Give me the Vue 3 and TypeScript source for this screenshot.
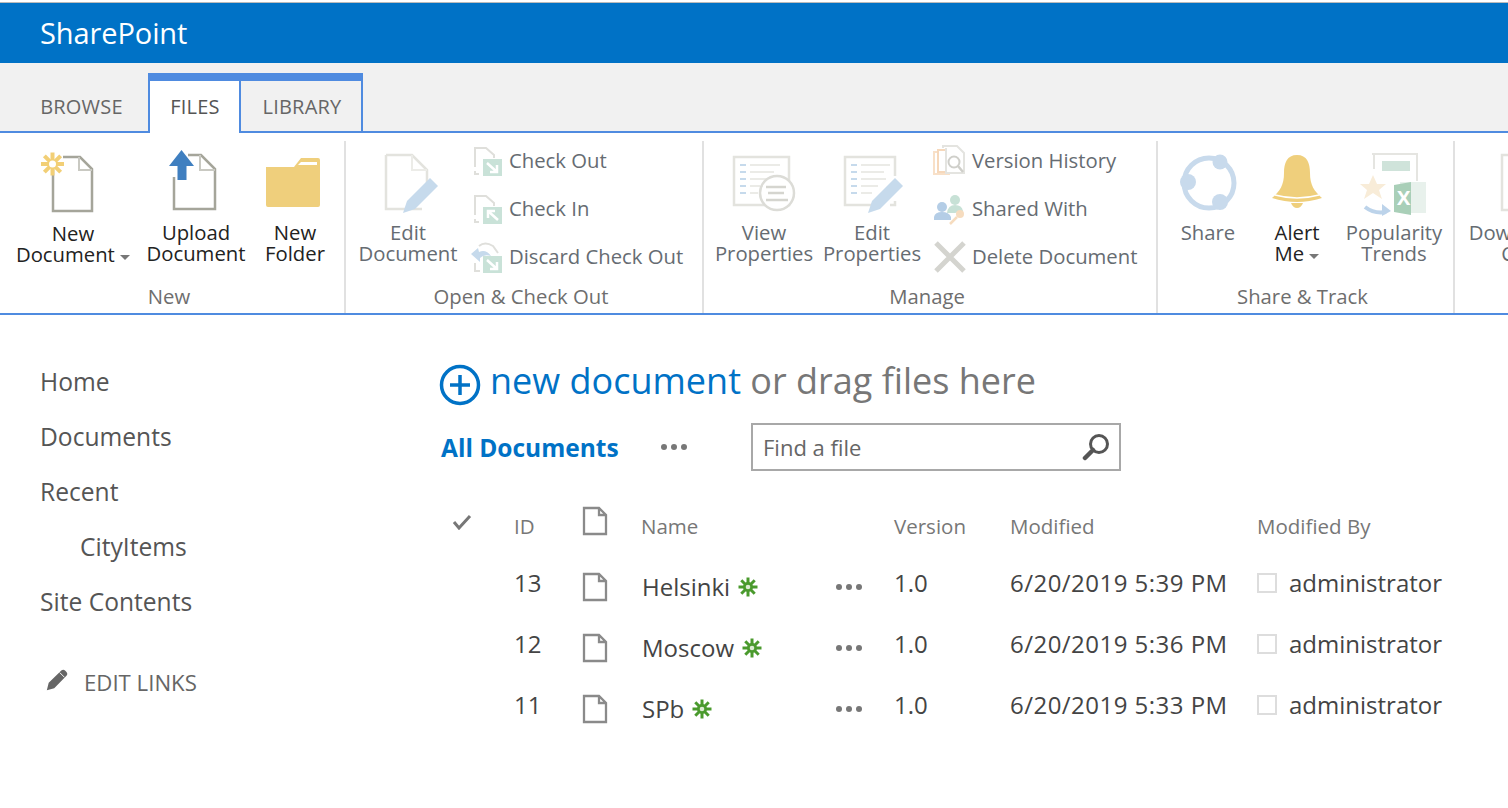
<script setup lang="ts">
const nav: { label: string; sub?: boolean }[] = [
  { label: 'Home' },
  { label: 'Documents' },
  { label: 'Recent' },
  { label: 'CityItems', sub: true },
  { label: 'Site Contents' },
]
const rows = [
  { id: 13, name: 'Helsinki', time: '6/20/2019 5:39 PM' },
  { id: 12, name: 'Moscow', time: '6/20/2019 5:36 PM' },
  { id: 11, name: 'SPb', time: '6/20/2019 5:33 PM' },
]
const rays = [0, 45, 90, 135]
</script>

<template>
  <div class="page">
    <header class="suite">SharePoint</header>

    <nav class="tabs">
      <div class="tab plain">BROWSE</div>
      <div class="tab active">FILES</div>
      <div class="tab ctx">LIBRARY</div>
      <div class="tab-fill"></div>
    </nav>

    <section class="ribbon">
      <div class="group g1">
        <div class="cmds">
          <div class="big w114 low">
            <svg class="ico" viewBox="0 0 80 81">
              <path d="M20 24V70H59V28L47 16H30" fill="none" stroke="#a5a59a" stroke-width="2.5" />
              <path d="M46 16V29H59" fill="none" stroke="#c9c9c2" stroke-width="2" />
              <g stroke="#f2cf76" stroke-width="4">
                <line v-for="r in rays" :key="r" x1="8" y1="23" x2="31" y2="23" :transform="`rotate(${r} 19.5 23)`" />
              </g>
              <circle cx="19.5" cy="23" r="3.500" fill="#fff" />
            </svg>
            <span class="txt on">New<br />Document <i class="caret"></i></span>
          </div>
          <div class="big w132">
            <svg class="ico" viewBox="0 0 80 81">
              <path d="M32 14H45L59 28V68H18V36" fill="none" stroke="#a5a59a" stroke-width="2.5" />
              <path d="M44 14V29H59" fill="none" stroke="#c9c9c2" stroke-width="2" />
              <path d="M25.500 9L38 25H30.500V39H21.500V25H13Z" fill="#3f7fc0" />
            </svg>
            <span class="txt on">Upload<br />Document</span>
          </div>
          <div class="big w66">
            <svg class="ico" viewBox="0 0 80 81">
              <path d="M11 26H39L46 17H63Q65 17 65 19V64Q65 66 63 66H13Q11 66 11 64Z" fill="#efcf7c" />
              <path d="M46 21L43 24H62V21Z" fill="#fff" />
            </svg>
            <span class="txt on">New<br />Folder</span>
          </div>
        </div>
        <div class="glabel">New</div>
      </div>

      <div class="group g2">
        <div class="cmds">
          <div class="big w124">
            <svg class="ico" viewBox="0 0 80 81">
              <path d="M18 14H44L59 29V53M54 68H18V14" fill="none" stroke="#e3e3de" stroke-width="2.500" />
              <path d="M44 14V29H59" fill="none" stroke="#ecece8" stroke-width="2" />
              <path d="M35 72L39 60L62 37L70 45L47 68Z" fill="#c6daec" />
            </svg>
            <span class="txt">Edit<br />Document</span>
          </div>
          <div class="small-list">
            <div class="small">
              <svg class="sico" viewBox="0 0 36 32">
                <path d="M5 22V3H16L24 10V13M5 26V29H9" fill="none" stroke="#dfdfdb" stroke-width="2" />
                <rect x="13" y="14" width="19" height="17" fill="#c9e2d8" />
                <path d="M17 18L27 27M27 20V27H20" fill="none" stroke="#fff" stroke-width="2.500" />
              </svg>
              <span class="txt">Check Out</span>
            </div>
            <div class="small">
              <svg class="sico" viewBox="0 0 36 32">
                <path d="M5 22V3H16L24 10V13M5 26V29H9" fill="none" stroke="#dfdfdb" stroke-width="2" />
                <rect x="13" y="14" width="19" height="17" fill="#c9e2d8" />
                <path d="M28 27L18 18M18 25V18H25" fill="none" stroke="#fff" stroke-width="2.500" />
              </svg>
              <span class="txt">Check In</span>
            </div>
            <div class="small">
              <svg class="sico" viewBox="0 0 36 32">
                <path d="M9 5Q15 0 23 5L28 12M5 22V30H10" fill="none" stroke="#dfdfdb" stroke-width="2" />
                <path d="M1 13L8 7L9 11Q16 8 21 15Q14 13 10 17L10 21Z" fill="#c6daec" />
                <rect x="13" y="15" width="19" height="17" fill="#c9e2d8" />
                <path d="M17 19L27 28M27 21V28H20" fill="none" stroke="#fff" stroke-width="2.500" />
              </svg>
              <span class="txt">Discard Check Out</span>
            </div>
          </div>
        </div>
        <div class="glabel">Open &amp; Check Out</div>
      </div>

      <div class="group g3">
        <div class="cmds">
          <div class="big w120">
            <svg class="ico" viewBox="0 0 80 81">
              <rect x="10" y="16" width="55" height="48" fill="none" stroke="#e3e3de" stroke-width="2.500" />
              <path d="M16 24H22M16 31H22M16 38H22M16 45H22M16 52H22" stroke="#c6daec" stroke-width="2" />
              <path d="M26 24H56M26 31H50M26 38H46M26 45H36M26 52H34" stroke="#ebebe7" stroke-width="2" />
              <circle cx="53" cy="52" r="17" fill="#fff" stroke="#dcdcd7" stroke-width="2.500" />
              <path d="M42 46H62M44 52H60M42 59H64" stroke="#d5d5cf" stroke-width="2.500" />
            </svg>
            <span class="txt">View<br />Properties</span>
          </div>
          <div class="big w96">
            <svg class="ico" viewBox="0 0 80 81">
              <path d="M63 35V16H13V64H41M63 60V64H58" fill="none" stroke="#e3e3de" stroke-width="2.500" />
              <path d="M19 24H25M19 31H25M19 38H25M19 45H25M19 52H25" stroke="#c6daec" stroke-width="2" />
              <path d="M29 24H58M29 31H52M29 38H54M29 45H46M29 52H40" stroke="#ebebe7" stroke-width="2" />
              <path d="M36 72L40 60L63 37L71 45L48 68Z" fill="#c6daec" />
            </svg>
            <span class="txt">Edit<br />Properties</span>
          </div>
          <div class="small-list m13">
            <div class="small">
              <svg class="sico" viewBox="0 0 36 32">
                <rect x="1" y="7" width="15" height="22" fill="none" stroke="#f8e0c8" stroke-width="2" />
                <rect x="5" y="5" width="15" height="22" fill="#fff" stroke="#f6d8bb" stroke-width="2" />
                <path d="M10 3V1H24L31 8V28H13V3" fill="#fff" stroke="#e4e4e0" stroke-width="2" />
                <circle cx="21" cy="17" r="5.500" fill="#fff" stroke="#cfcfca" stroke-width="2" />
                <path d="M25 21L30 27" stroke="#cfcfca" stroke-width="2.500" />
              </svg>
              <span class="txt">Version History</span>
            </div>
            <div class="small">
              <svg class="sico" viewBox="0 0 36 32">
                <circle cx="22" cy="7" r="5" fill="#c7e1d6" />
                <path d="M14 20Q15 12 22 12Q29 12 30 18L22 20Z" fill="#c7e1d6" />
                <circle cx="9" cy="14" r="5" fill="#b4cde6" />
                <path d="M1 27V24Q2 19 9 19Q16 19 18 24V27Z" fill="#b4cde6" />
                <circle cx="27" cy="21" r="4" fill="#f6dcbf" />
                <path d="M24 24L17 31" stroke="#f6dcbf" stroke-width="2.500" />
              </svg>
              <span class="txt">Shared With</span>
            </div>
            <div class="small">
              <svg class="sico" viewBox="0 0 36 32">
                <path d="M3 2L31 30M31 2L3 30" stroke="#d4d4cf" stroke-width="5" />
              </svg>
              <span class="txt">Delete Document</span>
            </div>
          </div>
        </div>
        <div class="glabel">Manage</div>
      </div>

      <div class="group g4">
        <div class="cmds">
          <div class="big w100">
            <svg class="ico" viewBox="0 0 80 81">
              <circle cx="41" cy="42" r="25" fill="none" stroke="#c8daec" stroke-width="5" />
              <circle cx="52" cy="21" r="7.500" fill="#c8daec" />
              <circle cx="20" cy="41" r="8" fill="#c8daec" />
              <circle cx="52" cy="61" r="8" fill="#c8daec" />
            </svg>
            <span class="txt">Share</span>
          </div>
          <div class="big w78">
            <svg class="ico" viewBox="0 0 80 81">
              <path d="M40 14C30 14 27 22 27 32C27 44 23 50 15 57Q40 65 65 57C57 50 53 44 53 32C53 22 50 14 40 14Z" fill="#efcf7c" />
              <path d="M18 54Q40 60 62 54" fill="none" stroke="#fff" stroke-width="1.500" />
              <path d="M34 62H46Q44 67 40 67Q36 67 34 62Z" fill="#efcf7c" />
            </svg>
            <span class="txt on">Alert<br />Me <i class="caret"></i></span>
          </div>
          <div class="big w116">
            <svg class="ico" viewBox="0 0 80 81">
              <path d="M18 13H63V40M20 13V28" fill="none" stroke="#e5e5e1" stroke-width="2" />
              <rect x="28" y="20" width="28" height="10" fill="#cfe3da" />
              <path d="M19 34L23 43H32L25 49L28 58L19 52L10 58L13 49L6 43H15Z" fill="#f8ecd8" />
              <path d="M11 66Q20 73 32 71" fill="none" stroke="#bcd3ea" stroke-width="4" />
              <path d="M28 63L37 70L28 75Z" fill="#bcd3ea" />
              <rect x="46" y="41" width="26" height="31" fill="#e8f1ec" />
              <path d="M40 44L57 41V74L40 71Z" fill="#a9cfb8" />
              <text x="43" y="64" font-size="20" font-weight="700" fill="#fff" font-family="'Open Sans', sans-serif">X</text>
            </svg>
            <span class="txt">Popularity<br />Trends</span>
          </div>
        </div>
        <div class="glabel">Share &amp; Track</div>
      </div>

      <div class="group g5">
        <div class="cmds">
          <div class="big w140">
            <svg class="ico" viewBox="0 0 80 81">
              <path d="M17 14H44L59 29V69H17Z" fill="none" stroke="#e3e3de" stroke-width="2.500" />
            </svg>
            <span class="txt">Download a<br />Copy</span>
          </div>
        </div>
      </div>
    </section>

    <main class="content">
      <aside class="side">
        <a v-for="n in nav" :key="n.label" class="nav-item" :class="{ sub: n.sub }">{{ n.label }}</a>
        <a class="edit-links">
          <svg class="pencil" viewBox="0 0 26 26">
            <path d="M2 24L4 16L18 2.500Q20 1 22 3L23.500 4.500Q25 6.500 23.500 8L10 22Z" fill="#666" />
            <path d="M16 5L21 10" stroke="#fff" stroke-width="1" />
          </svg>
          <span>EDIT LINKS</span>
        </a>
      </aside>

      <div class="main">
        <h1 class="hero">
          <svg class="plus" viewBox="0 0 42 42">
            <circle cx="21" cy="21" r="18.500" fill="none" stroke="#0072c6" stroke-width="3.500" />
            <path d="M21 11V31M11 21H31" stroke="#0072c6" stroke-width="3.500" />
          </svg>
          <span class="hero-text"><span class="link">new document</span> <span class="or">or drag files here</span></span>
        </h1>

        <div class="views">
          <span class="view-name">All Documents</span>
          <svg class="dots view-dots" viewBox="0 0 28 8"><circle v-for="x in [4, 14, 24]" :key="x" :cx="x" cy="4" r="3" fill="#777" /></svg>
          <div class="search">
            <span>Find a file</span>
            <svg class="mag" viewBox="0 0 28 28">
              <circle cx="17" cy="11" r="8.500" fill="none" stroke="#555" stroke-width="3" />
              <path d="M11 17L3 25" stroke="#555" stroke-width="4.500" stroke-linecap="round" />
            </svg>
          </div>
        </div>

        <div class="list">
          <div class="row head">
            <svg class="tick" viewBox="0 0 20 16"><path d="M2 8L7 14L18 2" fill="none" stroke="#777" stroke-width="3" /></svg>
            <span>ID</span>
            <svg class="doc up" viewBox="0 0 26 30">
              <path d="M2 2H17L24 9V28H2Z M17 2V9H24" fill="none" stroke="#8a8a8a" stroke-width="2.300" />
            </svg>
            <span class="hname">Name</span>
            <span></span>
            <span>Version</span>
            <span>Modified</span>
            <span>Modified By</span>
          </div>
          <div v-for="r in rows" :key="r.id" class="row data">
            <span></span>
            <span>{{ r.id }}</span>
            <svg class="doc" viewBox="0 0 26 30">
              <path d="M2 2H17L24 9V28H2Z M17 2V9H24" fill="none" stroke="#8a8a8a" stroke-width="2.300" />
            </svg>
            <span class="name">
              {{ r.name }}
              <svg class="new" viewBox="0 0 20 20">
                <g stroke="#4a9a2d" stroke-width="3">
                  <line v-for="a in rays" :key="a" x1="0.5" y1="10" x2="19.500" y2="10" :transform="`rotate(${a} 10 10)`" />
                </g>
                <circle cx="10" cy="10" r="5" fill="#4a9a2d" />
                <circle cx="10" cy="10" r="2.300" fill="#dcebd2" />
              </svg>
            </span>
            <svg class="dots" viewBox="0 0 28 8"><circle v-for="x in [4, 14, 24]" :key="x" :cx="x" cy="4" r="3" fill="#777" /></svg>
            <span>1.0</span>
            <span class="time">{{ r.time }}</span>
            <span class="by"><i class="box"></i>administrator</span>
          </div>
        </div>
      </div>
    </main>
  </div>
</template>

<style>
html, body { margin: 0; background: #fff; overflow: hidden; }
</style>

<style scoped>
.page {
  width: 1508px;
  height: 808px;
  overflow: hidden;
  font-family: "Open Sans", "Noto Sans", sans-serif;
  padding-top: 2px;
  box-sizing: border-box;
}
.suite {
  height: 61px;
  box-sizing: border-box;
  border-top: 1px solid #bbb;
  background: #0072c6;
  color: #fff;
  font-size: 29px;
  line-height: 60px;
  padding-left: 40px;
  letter-spacing: -0.1px;
}
.tabs {
  display: flex;
  height: 70px;
  background: #f1f1f1;
  align-items: flex-end;
}
.tab {
  height: 60px;
  box-sizing: border-box;
  font-size: 20px;
  color: #666;
  line-height: 52px;
  text-align: center;
  letter-spacing: 0.2px;
}
.plain {
  width: 148px;
  padding: 8px 0 0 15px;
  border-bottom: 2px solid #4f8be0;
}
.active, .ctx {
  border-top: 8px solid #4f8be0;
  flex: none;
}
.active {
  width: 93px;
  background: #fff;
  border-left: 2px solid #4f8be0;
  border-right: 2px solid #4f8be0;
  color: #555;
  padding-left: 1px;
}
.ctx {
  width: 122px;
  border-right: 2px solid #4f8be0;
  border-bottom: 2px solid #4f8be0;
  padding-left: 2px;
}
.tab-fill {
  flex: 1;
  height: 2px;
  background: #4f8be0;
}
.ribbon {
  display: flex;
  height: 182px;
  box-sizing: border-box;
  padding-top: 8px;
  border-bottom: 2px solid #4f8be0;
}
.group {
  display: flex;
  flex-direction: column;
  flex: none;
  box-sizing: border-box;
  border-right: 2px solid #e1e1e1;
}
.g1 { width: 346px; padding-left: 16px; }
.g2 { width: 358px; }
.g3 { width: 454px; }
.g4 { width: 297px; }
.g5 { width: 140px; border-right: 0; }
.cmds { display: flex; height: 142px; }
.glabel {
  height: 30px;
  font-size: 20.300px;
  line-height: 27px;
  color: #6e6e6e;
  text-align: center;
  padding-right: 6px;
}
.g1 .glabel { margin-left: -16px; }
.big {
  display: flex;
  flex-direction: column;
  align-items: center;
  flex: none;
  font-size: 20.300px;
  line-height: 21px;
  text-align: center;
  white-space: nowrap;
}
.ico { width: 80px; height: 81px; flex: none; }
.low .txt { padding-top: 1px; }
.w66 { width: 66px; }
.w78 { width: 78px; }
.w96 { width: 96px; }
.w100 { width: 100px; }
.w114 { width: 114px; }
.w116 { width: 116px; }
.w120 { width: 120px; }
.w124 { width: 124px; }
.w132 { width: 132px; }
.w140 { width: 140px; }
.txt { color: #666c72; }
.txt.on { color: #222; }
.caret {
  display: inline-block;
  width: 0;
  height: 0;
  border: 5px solid transparent;
  border-top: 5px solid #777;
  border-bottom: 0;
  vertical-align: 2px;
}
.small-list {
  display: flex;
  flex-direction: column;
  gap: 8px;
  font-size: 20.300px;
}
.m13 { margin-left: 13px; }
.small {
  display: flex;
  align-items: center;
  height: 40px;
  white-space: nowrap;
}
.small .txt { margin-top: -2px; }
.sico { width: 36px; height: 32px; margin-right: 3px; flex: none; }
.content { display: flex; }
.side {
  width: 441px;
  flex: none;
  box-sizing: border-box;
  padding: 39px 0 0 40px;
  display: flex;
  flex-direction: column;
}
.nav-item {
  height: 55px;
  line-height: 55px;
  font-size: 24.600px;
  color: #555;
}
.sub { padding-left: 40px; }
.edit-links {
  margin-top: 38px;
  height: 30px;
  display: flex;
  align-items: center;
  font-size: 22.200px;
  color: #666;
  padding-left: 5px;
}
.pencil { width: 24px; height: 24px; margin-right: 15px; margin-top: -4px; }
.main { flex: 1; padding-top: 40px; }
.hero {
  margin: 0 0 16px;
  height: 52px;
  display: flex;
  align-items: center;
  font-weight: 400;
  font-size: 36px;
  white-space: pre;
}
.hero-text { margin-top: -2px; margin-left: 1px; }
.plus { width: 42px; height: 42px; margin: 8px 8px 0 -2px; flex: none; }
.link { color: #0072c6; }
.or { color: #777; }
.views {
  display: flex;
  align-items: center;
  height: 48px;
  margin-bottom: 25px;
}
.view-name {
  width: 219px;
  flex: none;
  color: #0072c6;
  font-size: 24.500px;
  font-weight: 700;
  white-space: nowrap;
}
.dots { width: 28px; height: 8px; }
.view-dots { margin-right: 63px; }
.search {
  width: 370px;
  height: 48px;
  box-sizing: border-box;
  border: 2px solid #a8a8a8;
  display: flex;
  align-items: center;
  justify-content: space-between;
  padding: 0 9px 0 10px;
  font-size: 22px;
  color: #666;
}
.mag { width: 28px; height: 28px; }
.list { font-size: 24px; color: #444; }
.row {
  display: grid;
  grid-template-columns: 73px 68px 60px 193px 59px 116px 247px 1fr;
  align-items: center;
  white-space: nowrap;
}
.head { height: 57px; font-size: 20.500px; color: #777; padding-top: 2px; box-sizing: border-box; }
.hname { margin-left: -1px; }
.data { height: 61px; }
.data > span { margin-top: -2px; }
.data > .dots { margin-top: 6px; }
.time { letter-spacing: 0.47px; }
.tick { width: 20px; height: 16px; margin: -7px 0 0 11px; }
.doc { width: 26px; height: 30px; margin: 6px 0 0 0; }
.doc.up { margin-top: -9px; }
.data .name { display: flex; align-items: center; gap: 8px; margin-top: 6px; }
.new { width: 20px; height: 20px; }
.box {
  display: inline-block;
  width: 20px;
  height: 20px;
  box-sizing: border-box;
  border: 2px solid #ddd;
  margin-right: 12px;
  vertical-align: -1px;
}
</style>
